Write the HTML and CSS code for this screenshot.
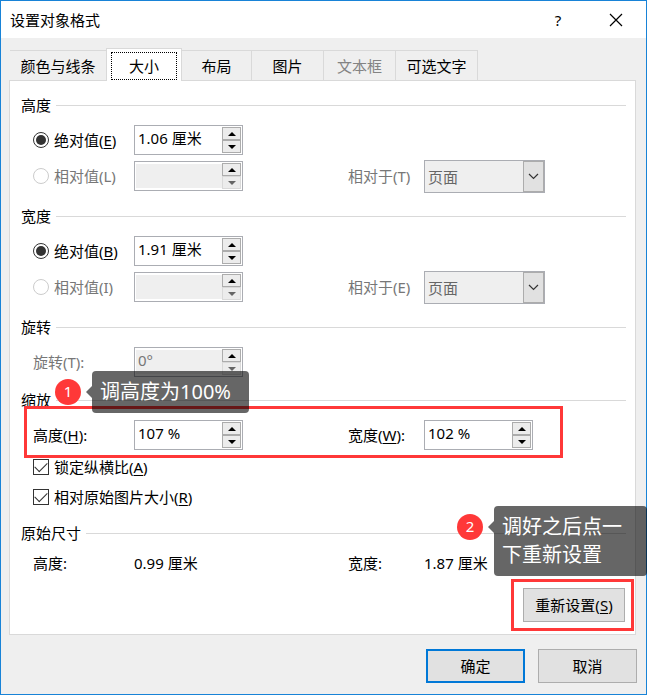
FILE: index.html
```html
<!DOCTYPE html>
<html lang="zh-CN">
<head>
<meta charset="utf-8">
<meta name="viewport" content="width=device-width, initial-scale=1">
<title>设置对象格式</title>
<link rel="stylesheet" href="styles.css">
</head>
<body>
<main class="dialog">
  <header class="titlebar">
    <h1 class="title">设置对象格式</h1>
    <button class="title-btn" type="button">?</button>
    <button class="title-btn" type="button" aria-label="关闭">
      <svg width="14" height="14" viewBox="0 0 14 14"><path d="M1 1l12 12M13 1L1 13" fill="none" stroke="#000" stroke-width="1.2"/></svg>
    </button>
  </header>

  <form class="content">
    <nav class="tabs" role="tablist">
      <button class="tab tab-first" type="button" role="tab">颜色与线条</button>
      <button class="tab tab-active" type="button" role="tab" aria-selected="true"><span class="focus">大小</span></button>
      <button class="tab tab-narrow" type="button" role="tab">布局</button>
      <button class="tab" type="button" role="tab">图片</button>
      <button class="tab" type="button" role="tab" disabled>文本框</button>
      <button class="tab tab-wide" type="button" role="tab">可选文字</button>
    </nav>

    <div class="panel">
      <section class="group">
        <h2 class="legend">高度</h2>
        <div class="row">
          <label class="choice"><input class="radio" type="radio" name="h" checked><span>绝对值(<u>E</u>)</span></label>
          <div class="spin">
            <input class="spin-input" type="text" value="1.06 厘米" aria-label="高度绝对值">
            <div class="spin-btns">
              <button class="step up" type="button" aria-label="增加"></button>
              <button class="step down" type="button" aria-label="减少"></button>
            </div>
          </div>
        </div>
        <div class="row">
          <label class="choice muted"><input class="radio" type="radio" name="h" disabled><span>相对值(L)</span></label>
          <div class="spin">
            <input class="spin-input" type="text" disabled aria-label="高度相对值">
            <div class="spin-btns">
              <button class="step up" type="button" aria-label="增加"></button>
              <button class="step down" type="button" disabled aria-label="减少"></button>
            </div>
          </div>
          <label class="muted" for="rel-h">相对于(T)</label>
          <div class="combo">
            <select class="combo-select" id="rel-h" disabled><option>页面</option></select>
            <span class="combo-arrow"><svg width="11" height="7" viewBox="0 0 11 7"><path d="M1 1l4.500 4.500L10 1" fill="none" stroke="#333" stroke-width="1.200"/></svg></span>
          </div>
        </div>
      </section>

      <section class="group">
        <h2 class="legend">宽度</h2>
        <div class="row">
          <label class="choice"><input class="radio" type="radio" name="w" checked><span>绝对值(<u>B</u>)</span></label>
          <div class="spin">
            <input class="spin-input" type="text" value="1.91 厘米" aria-label="宽度绝对值">
            <div class="spin-btns">
              <button class="step up" type="button" aria-label="增加"></button>
              <button class="step down" type="button" aria-label="减少"></button>
            </div>
          </div>
        </div>
        <div class="row">
          <label class="choice muted"><input class="radio" type="radio" name="w" disabled><span>相对值(I)</span></label>
          <div class="spin">
            <input class="spin-input" type="text" disabled aria-label="宽度相对值">
            <div class="spin-btns">
              <button class="step up" type="button" aria-label="增加"></button>
              <button class="step down" type="button" disabled aria-label="减少"></button>
            </div>
          </div>
          <label class="muted" for="rel-w">相对于(E)</label>
          <div class="combo">
            <select class="combo-select" id="rel-w" disabled><option>页面</option></select>
            <span class="combo-arrow"><svg width="11" height="7" viewBox="0 0 11 7"><path d="M1 1l4.500 4.500L10 1" fill="none" stroke="#333" stroke-width="1.200"/></svg></span>
          </div>
        </div>
      </section>

      <section class="group group-tight">
        <h2 class="legend">旋转</h2>
        <div class="row">
          <label class="muted" for="rotate">旋转(T):</label>
          <div class="spin">
            <input class="spin-input" id="rotate" type="text" value="0°" disabled>
            <div class="spin-btns">
              <button class="step up" type="button" aria-label="增加"></button>
              <button class="step down" type="button" disabled aria-label="减少"></button>
            </div>
          </div>
        </div>
      </section>

      <section class="group group-tight">
        <h2 class="legend">缩放</h2>
        <div class="row marked">
          <label for="scale-h">高度(<u>H</u>):</label>
          <div class="spin">
            <input class="spin-input" id="scale-h" type="text" value="107 %">
            <div class="spin-btns">
              <button class="step up" type="button" aria-label="增加"></button>
              <button class="step down" type="button" aria-label="减少"></button>
            </div>
          </div>
          <label for="scale-w">宽度(<u>W</u>):</label>
          <div class="spin">
            <input class="spin-input" id="scale-w" type="text" value="102 %">
            <div class="spin-btns">
              <button class="step up" type="button" aria-label="增加"></button>
              <button class="step down" type="button" aria-label="减少"></button>
            </div>
          </div>
          <div class="frame frame-scale"></div>
          <div class="note note-scale"><span class="badge">1</span><p class="bubble">调高度为100%</p></div>
        </div>
        <label class="choice check-row"><input class="check" type="checkbox" checked><span>锁定纵横比(<u>A</u>)</span></label>
        <label class="choice check-row"><input class="check" type="checkbox" checked><span>相对原始图片大小(<u>R</u>)</span></label>
      </section>

      <section class="group">
        <h2 class="legend">原始尺寸</h2>
        <div class="row row-text">
          <span>高度:</span><span>0.99 厘米</span><span>宽度:</span><span>1.87 厘米</span>
        </div>
        <div class="reset">
          <button class="btn btn-reset" type="button">重新设置(<u>S</u>)</button>
          <div class="frame frame-reset"></div>
          <div class="note note-reset"><span class="badge">2</span><p class="bubble">调好之后点一下重新设置</p></div>
        </div>
      </section>
    </div>

    <footer class="actions">
      <button class="btn btn-default" type="button">确定</button>
      <button class="btn" type="button">取消</button>
    </footer>
  </form>
</main>
</body>
</html>
```

FILE: styles.css
```css
* { box-sizing: border-box; }

body {
  margin: 0;
  overflow-x: hidden;
  background: #efefef;
  color: #000;
  font: 15px/20px "Noto Sans", "Noto Sans CJK SC", sans-serif;
}

button, input, select { font: inherit; color: inherit; }
h1, h2, p { margin: 0; font: inherit; }
button { padding: 0; }
u { text-underline-offset: 2px; }

.dialog {
  display: flex;
  flex-direction: column;
  min-height: 100vh;
  border: 1px solid #1883d7;
}

.titlebar {
  display: flex;
  align-items: center;
  height: 37px;
  padding: 0 1px 0 9px;
  background: #fff;
}
.title { flex: 1; }
.title-btn {
  display: flex;
  align-items: center;
  justify-content: center;
  width: 58px;
  height: 36px;
  border: 0;
  background: none;
}

.content {
  flex: 1;
  display: flex;
  flex-direction: column;
  padding: 10px 9px 11px 8px;
}

/* Tabs */
.tabs {
  display: flex;
  align-items: flex-end;
  padding-left: 1px;
}
.tab {
  width: 72px;
  height: 30px;
  border: 1px solid #d9d9d9;
  border-width: 1px 1px 0 0;
  background: #efefef;
}
.tab:disabled { color: #838383; }
.tab-first { width: 96px; border-right: 0; }
.tab-narrow { width: 70px; }
.tab-wide { width: 82px; }
.tab-active {
  position: relative;
  z-index: 1;
  width: 76px;
  height: 33px;
  margin-bottom: -1px;
  padding: 3px 4px 1px;
  border-left-width: 1px;
  background: #fff;
}
.focus {
  display: flex;
  align-items: center;
  justify-content: center;
  height: 28px;
  border: 1px dotted #000;
}

/* Panel */
.panel {
  margin-right: 1px;
  padding: 14px 9px 12px 11px;
  border: 1px solid #d9d9d9;
  background: #fff;
}
.group {
  display: flex;
  flex-direction: column;
  gap: 6px;
  margin-bottom: 15px;
}
.group-tight { margin-bottom: 13px; }
.group:last-child { margin-bottom: 0; }
.legend {
  display: flex;
  align-items: center;
  gap: 5px;
  margin-bottom: 4px;
}
.legend::after {
  content: "";
  flex: 1;
  height: 1px;
  background: #d9d9d9;
}
.row {
  display: grid;
  grid-template-columns: 101px 214px 76px 1fr;
  align-items: center;
  height: 30px;
  margin-left: 12px;
}
.row-text { height: 20px; }
.muted { color: #777; }

.choice {
  display: flex;
  align-items: center;
  gap: 5px;
}
.check-row { margin: 1px 0 3px 12px; }

.radio, .check {
  flex: none;
  display: grid;
  place-items: center;
  appearance: none;
  width: 16px;
  height: 16px;
  margin: 0;
  border: 1px solid #333;
  background: #fff;
}
.radio { border-radius: 50%; }
.radio:checked::before {
  content: "";
  width: 10px;
  height: 10px;
  border-radius: 50%;
  background: #333;
}
.radio:disabled { border-color: #ccc; }
.check:checked::before {
  content: "";
  width: 11px;
  height: 6px;
  margin-bottom: 3px;
  border: solid #333;
  border-width: 0 0 1px 1px;
  transform: rotate(-45deg);
}

/* Number fields */
.spin {
  display: flex;
  width: 109px;
  height: 30px;
  padding: 1px;
  border: 1px solid #abadb3;
  background: #fff;
}
.spin-input {
  flex: 1;
  min-width: 0;
  padding: 0 0 4px 2px;
  border: 0;
  background: none;
}
.spin-input:disabled {
  margin: 1px 0;
  background: #efefef;
  color: #777;
}
.spin-btns {
  display: flex;
  flex-direction: column;
  width: 19px;
  background: #efefef;
}
.step {
  flex: 1;
  display: grid;
  place-items: center;
  border: 1px solid #acacac;
  background: #ececec;
}
.step::before {
  content: "";
  border: solid transparent;
  border-width: 0 4px;
}
.up::before { border-bottom: 4px solid #000; }
.down::before { border-top: 4px solid #000; }
.step:disabled { border-color: #d9d9d9; }
.step:disabled::before { border-top-color: #666; }

/* Drop-down */
.combo {
  position: relative;
  width: 121px;
  height: 33px;
  margin: -1px 0 -2px;
}
.combo-select {
  appearance: none;
  width: 100%;
  height: 100%;
  padding: 0 24px 0 3px;
  border: 1px solid #abadb3;
  border-radius: 0;
  background: #efefef;
  color: #666;
  opacity: 1;
}
.combo-arrow {
  position: absolute;
  inset: 1px 1px 1px auto;
  display: grid;
  place-items: center;
  width: 21px;
  border: 1px solid #acacac;
  background: #e1e1e1;
  pointer-events: none;
}

/* Buttons */
.btn {
  width: 99px;
  height: 34px;
  border: 1px solid #adadad;
  background: #e1e1e1;
}
.btn-default { border: 2px solid #0078d7; }
.btn-reset { width: 102px; }
.reset {
  position: relative;
  align-self: flex-end;
  height: 34px;
  margin: 9px 1px 0 0;
}
.actions {
  display: flex;
  justify-content: flex-end;
  gap: 13px;
  margin-top: 14px;
}

/* Annotations */
.marked { position: relative; }
.frame {
  position: absolute;
  border: 3px solid #ff3838;
  pointer-events: none;
}
.frame-scale { left: -9px; top: -14px; width: 539px; height: 52px; }
.frame-reset { inset: -9px -9px -9px -12px; }
.note {
  position: absolute;
  z-index: 2;
  display: flex;
  gap: 11px;
}
.note-scale { left: 22px; top: -49px; }
.note-reset { right: -22px; top: -82px; }
.badge {
  flex: none;
  width: 26px;
  height: 26px;
  margin-top: 8px;
  border-radius: 50%;
  background: #ff3838;
  color: #fff;
  line-height: 24px;
  text-align: center;
}
.bubble {
  position: relative;
  min-width: 157px;
  padding: 7px 16px 7px 8px;
  border-radius: 4px;
  background: rgba(0, 0, 0, 0.6);
  color: #fff;
  font-size: 20px;
  line-height: 28px;
  white-space: nowrap;
}
.note-reset .bubble {
  width: 153px;
  min-width: 0;
  white-space: normal;
}
.bubble::before {
  content: "";
  position: absolute;
  right: 100%;
  top: 15px;
  border: solid transparent;
  border-width: 6px 6px 6px 0;
  border-right-color: rgba(0, 0, 0, 0.6);
}
```
